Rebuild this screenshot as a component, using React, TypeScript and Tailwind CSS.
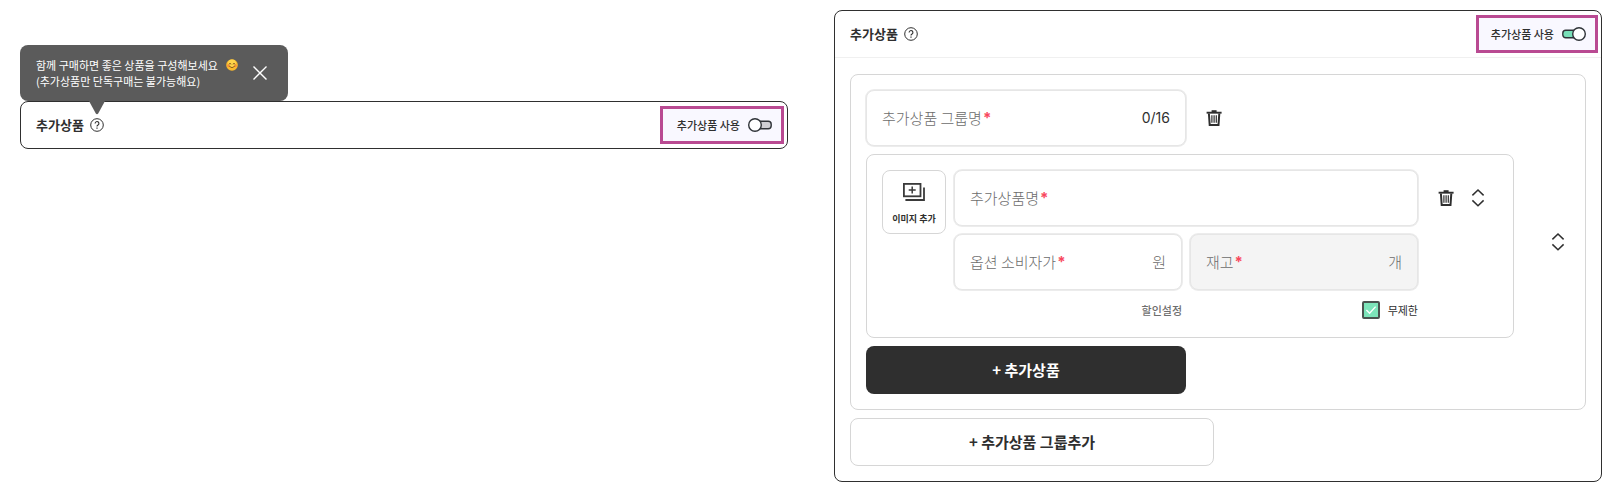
import { useState } from "react"
import type { ReactNode } from "react"

function HelpIcon(){
 return(
  <svg width="14" height="14" viewBox="0 0 14 14" fill="none" stroke="#2f2f2f">
   <circle cx="7" cy="7" r="6.3" strokeWidth="1" />
   <path d="M5.1 5.5a1.9 1.9 0 1 1 2.9 1.6c-.7.4-1 .8-1 1.5" strokeWidth="1.1" />
   <path d="M7 9.6v1.2" strokeWidth="1.2" />
  </svg>
 )
}

function SmileIcon(){
 return(
  <svg width="12" height="12" viewBox="0 0 12 12" fill="none" className="shrink-0">
   <circle cx="6" cy="6" r="5.8" fill="#fbb92c" />
   <circle cx="6" cy="4.6" r="4" fill="#ffd54a" />
   <circle cx="2.6" cy="6.8" r="1.3" fill="#f58a3c" />
   <circle cx="9.4" cy="6.8" r="1.3" fill="#f58a3c" />
   <path d="M3 4.9q1-1.3 2 0M7 4.9q1-1.3 2 0" stroke="#6b3d12" strokeWidth=".8" strokeLinecap="round" />
   <path d="M3.6 7.6q2.4 2.4 4.8 0" stroke="#6b3d12" strokeWidth=".8" strokeLinecap="round" />
  </svg>
 )
}

function TrashIcon(){
 return(
  <svg width="24" height="24" viewBox="0 0 24 24" fill="none" stroke="#2f2f2f">
   <path d="M4.6 6.7h15" strokeWidth="1.9" />
   <path d="M9.6 5.2h5" strokeWidth="2" />
   <path d="M6.9 7.5l.8 11.5h8.8l.8-11.5" strokeWidth="2" />
   <path d="M9.9 9.2v7.6M12.1 9.2v7.6M14.3 9.2v7.6" strokeWidth="1.2" />
  </svg>
 )
}

function SortIcon(){
 return(
  <svg width="24" height="24" viewBox="0 0 24 24" fill="none" stroke="#2f2f2f" strokeWidth="1.5">
   <path d="M6.4 9.4L12 4l5.6 5.4M6.4 14.4l5.6 5.4 5.6-5.4" />
  </svg>
 )
}

function AddImageIcon(){
 return(
  <svg width="22" height="18" viewBox="0 0 22 18" fill="none" stroke="#3a3a3a" strokeWidth="1.8">
   <rect x=".9" y=".9" width="16.6" height="12.4" />
   <path d="M21 4.6v12.4H2.4" />
   <path d="M9.2 3.6v7M5.7 7.1h7" strokeWidth="1.5" />
  </svg>
 )
}

function UseToggle({ id, on, onChange, pad }: { id: string, on: boolean, onChange: (v: boolean) => void, pad: string }){
 return(
  <label htmlFor={id} className={`relative flex items-center gap-2 h-[38px] mr-[3px] border-3 border-[#b94a92] bg-[#f9f8ff] cursor-pointer ${pad}`}>
   <span className="text-[11px] leading-4 font-medium">추가상품 사용</span>
   <input
    id={id}
    type="checkbox"
    role="switch"
    checked={on}
    onChange={e=>onChange(e.target.checked)}
    className="sr-only"
   />
   <svg width="24" height="14" viewBox="0 0 24 14" stroke="#2f3338" strokeWidth="1.4">
    {on ? (
     <>
      <rect x=".8" y="3.2" width="18" height="7.6" rx="3" fill="#78dfb8" />
      <circle cx="17" cy="7" r="6.3" fill="#fff" />
     </>
    ) : (
     <>
      <rect x="5" y="3.2" width="18.2" height="7.6" rx="3" fill="#cfcfd4" />
      <circle cx="7" cy="7" r="6.3" fill="#fff" />
     </>
    )}
   </svg>
  </label>
 )
}

function CardTitle(){
 return(
  <div className="flex items-center gap-[6px]">
   <h2 className="text-[13px] leading-5 font-bold">추가상품</h2>
   <button type="button" aria-label="도움말"><HelpIcon /></button>
  </div>
 )
}

function Field({ id, label, suffix, disabled, className }: { id: string, label: string, suffix?: ReactNode, disabled?: boolean, className?: string }){
 return(
  <div className={`flex items-center h-14 px-[15px] rounded-lg border border-[#e6e6e6] ring-1 ring-[#ececec] ${disabled ? "bg-[#f4f4f4]" : "bg-white"} ${className || ""}`}>
   <label htmlFor={id} className="flex items-center gap-px shrink-0 text-[15px] leading-5 font-light text-[#6c6c6c]">
    {label}
    <span className="font-['Inter'] font-bold text-[#f8485e]">*</span>
   </label>
   <input id={id} disabled={disabled} className="flex-1 min-w-0 h-full bg-transparent outline-none text-[15px]" />
   {suffix}
  </div>
 )
}

export default function App(){

 const [leftOn, setLeftOn] = useState(false)
 const [rightOn, setRightOn] = useState(true)
 const [tipOpen, setTipOpen] = useState(true)
 const [unlimited, setUnlimited] = useState(true)

 return(

  <div className="grid grid-cols-2 items-start gap-x-[46px] pl-5 pr-[22px] py-[10px] bg-white text-[#2f2f2f] font-['Noto_Sans_CJK_KR',sans-serif]">

   <div className="pt-[35px]">

    <div className={`relative flex items-center justify-between w-[268px] h-14 pl-4 pr-[21px] rounded-lg bg-[#5b5b5b] text-white ${tipOpen ? "" : "invisible"}`}>
     <div className="text-[11px] leading-4">
      <p className="flex items-center gap-2">함께 구매하면 좋은 상품을 구성해보세요 <SmileIcon /></p>
      <p>(추가상품만 단독구매는 불가능해요)</p>
     </div>
     <button type="button" aria-label="닫기" onClick={()=>setTipOpen(false)}>
      <svg width="14" height="14" viewBox="0 0 14 14" stroke="#fff" strokeWidth="1.4">
       <path d="M.5.5l13 13M13.5.5l-13 13" />
      </svg>
     </button>
     <svg width="16" height="14" viewBox="0 0 16 14" className="absolute left-[69px] top-full">
      <path d="M0 0h16L9.2 12.4q-1.2 1.6-2.4 0z" fill="#5b5b5b" />
     </svg>
    </div>

    <section className="flex items-center justify-between h-12 pl-[15px] rounded-lg border border-[#2f2f2f]">
     <CardTitle />
     <UseToggle id="use-left" on={leftOn} onChange={setLeftOn} pad="pl-[14px] pr-[9px]" />
    </section>

   </div>

   <section className="rounded-lg border border-[#2f2f2f]">

    <div className="flex items-center justify-between h-[47px] pl-[15px] border-b border-[#f0f0f0]">
     <CardTitle />
     <UseToggle id="use-right" on={rightOn} onChange={setRightOn} pad="pl-3 pr-[9px]" />
    </div>

    <div className="px-[15px] pt-4 pb-[15px]">

     <div className="flex items-center gap-8 p-[15px] rounded-lg border border-[#d6d6d6]">

      <div className="flex-1 flex flex-col gap-2">

       <div className="flex items-center gap-4">
        <Field
         id="group-name"
         label="추가상품 그룹명"
         className="w-80"
         suffix={<span className="font-['Inter'] text-[14px] leading-5">0/16</span>}
        />
        <button type="button" aria-label="그룹 삭제"><TrashIcon /></button>
       </div>

       <div className="flex items-start gap-2 py-[15px] pl-[15px] pr-[23px] rounded-lg border border-[#d6d6d6]">

        <button type="button" className="flex flex-col items-center gap-3 size-16 pt-3 shrink-0 rounded-lg border border-[#d6d6d6]">
         <AddImageIcon />
         <span className="text-[9px] leading-3 font-bold">이미지 추가</span>
        </button>

        <div className="flex-1 grid grid-cols-2 gap-2">
         <Field id="item-name" label="추가상품명" className="col-span-2" />
         <Field
          id="item-price"
          label="옵션 소비자가"
          suffix={<span className="text-[15px] leading-5 font-light text-[#6c6c6c]">원</span>}
         />
         <Field
          id="item-stock"
          label="재고"
          disabled
          suffix={<span className="text-[15px] leading-5 font-light text-[#6c6c6c]">개</span>}
         />
         <div className="flex items-center justify-end h-6">
          <button type="button" className="text-[11px] leading-4 font-medium text-[#6e6e6e]">할인설정</button>
         </div>
         <label htmlFor="unlimited" className="flex items-center justify-end gap-2 h-6">
          <span className="grid place-items-center">
           <input
            id="unlimited"
            type="checkbox"
            checked={unlimited}
            onChange={e=>setUnlimited(e.target.checked)}
            className="col-start-1 row-start-1 appearance-none size-[18px] rounded-[2px] border-2 border-[#4a5450] checked:bg-[#7ce5ba]"
           />
           <svg width="12" height="10" viewBox="0 0 12 10" fill="none" stroke="#fff" strokeWidth="1.4" className="col-start-1 row-start-1 pointer-events-none">
            <path d="M1.4 5l3.2 3.2 6-6.6" />
           </svg>
          </span>
          <span className="text-[11px] leading-4">무제한</span>
         </label>
        </div>

        <div className="flex items-center gap-2 h-14 pl-2">
         <button type="button" aria-label="상품 삭제"><TrashIcon /></button>
         <button type="button" aria-label="상품 순서 변경"><SortIcon /></button>
        </div>

       </div>

       <button type="button" className="w-80 h-12 rounded-lg bg-[#2f2f2f] text-white text-[15px] leading-5 font-bold">
        + 추가상품
       </button>

      </div>

      <button type="button" aria-label="그룹 순서 변경"><SortIcon /></button>

     </div>

     <button type="button" className="w-[364px] h-12 mt-2 rounded-lg border border-[#d6d6d6] text-[15px] leading-5 font-bold">
      + 추가상품 그룹추가
     </button>

    </div>

   </section>

  </div>

 )

}
